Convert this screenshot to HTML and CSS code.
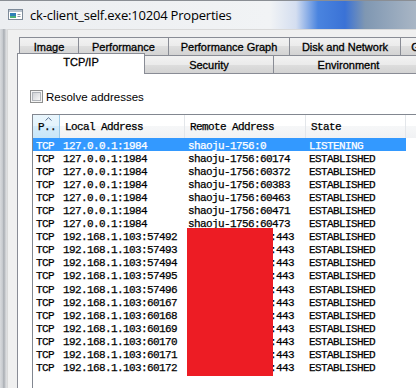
FILE: index.html
```html
<!DOCTYPE html>
<html>
<head>
<meta charset="utf-8">
<title>ck-client_self.exe:10204 Properties</title>
<link rel="stylesheet" href="styles.css">
</head>
<body>
<div class="window">
  <div class="titlebar">
    <svg class="app-icon" width="15" height="11" viewBox="0 0 15 11">
      <rect x="0.5" y="0.5" width="14" height="10" fill="#fff" stroke="#7d8a99"/>
      <rect x="1" y="1" width="13" height="2" fill="#b9c3cf"/>
      <rect x="2" y="4" width="6" height="5" fill="#2f7fb8"/>
      <rect x="2" y="7" width="6" height="2" fill="#4bb07a"/>
      <path d="M9.5 5.5h3M9.5 7.5h3" stroke="#8a96a4"/>
    </svg>
    <span class="title">ck-client_self.exe:10204 Properties</span>
  </div>
  <div class="frame">
    <div class="edge"></div>
    <div class="dialog">
      <div class="tabrow row1">
        <div class="tab w-image">Image</div>
        <div class="tab w-perf">Performance</div>
        <div class="tab w-graph">Performance Graph</div>
        <div class="tab w-disk">Disk and Network</div>
        <div class="tab w-gpu">GPU Graph</div>
      </div>
      <div class="tabrow row2">
        <div class="tab active w-tcp">TCP/IP</div>
        <div class="tab w-sec">Security</div>
        <div class="tab w-env">Environment</div>
      </div>
      <div class="panel">
        <label class="option"><span class="checkbox"><span class="check-inner"></span></span>Resolve addresses</label>
        <div class="list">
          <div class="header">
            <div class="hcell sorted">P..<svg class="sort-arrow" width="7" height="4" viewBox="0 0 7 4"><path d="M0.5 3.5L3.5 0.7L6.5 3.5" fill="none" stroke="#5b7396"/></svg></div>
            <div class="hcell">Local Address</div>
            <div class="hcell">Remote Address</div>
            <div class="hcell">State</div>
            <div class="hcell last"></div>
          </div>
          <div class="row selected"><span>TCP</span><span>127.0.0.1:1984</span><span>shaoju-1756:0</span><span>LISTENING</span></div>
          <div class="row"><span>TCP</span><span>127.0.0.1:1984</span><span>shaoju-1756:60174</span><span>ESTABLISHED</span></div>
          <div class="row"><span>TCP</span><span>127.0.0.1:1984</span><span>shaoju-1756:60372</span><span>ESTABLISHED</span></div>
          <div class="row"><span>TCP</span><span>127.0.0.1:1984</span><span>shaoju-1756:60383</span><span>ESTABLISHED</span></div>
          <div class="row"><span>TCP</span><span>127.0.0.1:1984</span><span>shaoju-1756:60463</span><span>ESTABLISHED</span></div>
          <div class="row"><span>TCP</span><span>127.0.0.1:1984</span><span>shaoju-1756:60471</span><span>ESTABLISHED</span></div>
          <div class="row"><span>TCP</span><span>127.0.0.1:1984</span><span>shaoju-1756:60473</span><span>ESTABLISHED</span></div>
          <div class="row"><span>TCP</span><span>192.168.1.103:57492</span><span class="masked">:443</span><span>ESTABLISHED</span></div>
          <div class="row"><span>TCP</span><span>192.168.1.103:57493</span><span class="masked">:443</span><span>ESTABLISHED</span></div>
          <div class="row"><span>TCP</span><span>192.168.1.103:57494</span><span class="masked">:443</span><span>ESTABLISHED</span></div>
          <div class="row"><span>TCP</span><span>192.168.1.103:57495</span><span class="masked">:443</span><span>ESTABLISHED</span></div>
          <div class="row"><span>TCP</span><span>192.168.1.103:57496</span><span class="masked">:443</span><span>ESTABLISHED</span></div>
          <div class="row"><span>TCP</span><span>192.168.1.103:60167</span><span class="masked">:443</span><span>ESTABLISHED</span></div>
          <div class="row"><span>TCP</span><span>192.168.1.103:60168</span><span class="masked">:443</span><span>ESTABLISHED</span></div>
          <div class="row"><span>TCP</span><span>192.168.1.103:60169</span><span class="masked">:443</span><span>ESTABLISHED</span></div>
          <div class="row"><span>TCP</span><span>192.168.1.103:60170</span><span class="masked">:443</span><span>ESTABLISHED</span></div>
          <div class="row"><span>TCP</span><span>192.168.1.103:60171</span><span class="masked">:443</span><span>ESTABLISHED</span></div>
          <div class="row"><span>TCP</span><span>192.168.1.103:60172</span><span class="masked">:443</span><span>ESTABLISHED</span></div>
        </div>
      </div>
    </div>
  </div>
  <div class="redaction"></div>
</div>
</body>
</html>
```
FILE: styles.css
```css
* { box-sizing: border-box; }
html, body { margin: 0; padding: 0; }
body { width: 416px; height: 388px; overflow: hidden; background: #f0f0f0; }

.window {
  position: relative;
  width: 416px;
  height: 388px;
  overflow: hidden;
  display: flex;
  flex-direction: column;
}

.titlebar {
  flex: none;
  height: 29px;
  display: flex;
  align-items: center;
  gap: 7px;
  padding-left: 8px;
  border-top: 1px solid #8a8e94;
  background: linear-gradient(to right, #eceef1 0, #f1f3f5 270px, #d4def0 296px, #4a84df 318px, #3a72d6 345px, #7f97b2 365px, #a9b6c5 416px);
}
.app-icon { flex: none; margin-top: -2px; }
.title {
  font: 13px "Open Sans", "Noto Sans", sans-serif;
  letter-spacing: -0.2px;
  color: #000;
  white-space: nowrap;
}

.frame { flex: 1; display: flex; min-height: 0; }
.edge {
  flex: none;
  width: 7px;
  background: linear-gradient(to right, #d9dbde, #c8cbcf 35%, #a8acb2 55%, #cfd1d4 80%, #e3e4e6);
}
.dialog {
  flex: 1;
  min-width: 0;
  display: flex;
  flex-direction: column;
  background: #f0f0f0;
  border-left: 1px solid #d9d9d9;
  border-top: 1px solid #d9d9d9;
  padding: 7px 0 0 9px;
}

.tabrow { flex: none; display: flex; height: 18px; }
.row1 { margin-left: 2px; }
.row2 { align-items: flex-end; }
.tab {
  flex: none;
  height: 18px;
  margin-right: -1px;
  border: 1px solid #898c95;
  border-bottom: 0;
  background: linear-gradient(#f2f2f2, #ebebeb 50%, #dedede 50%, #d3d3d3);
  display: flex;
  align-items: center;
  justify-content: center;
  font: 11px "Liberation Sans", Arial, sans-serif;
  -webkit-text-stroke: 0.3px #000;
  color: #000;
  white-space: nowrap;
}
.tab.active {
  position: relative;
  z-index: 1;
  height: 21px;
  margin-bottom: -1px;
  background: #fff;
  align-items: flex-start;
  padding-top: 2px;
}
.w-image { width: 60px; }
.w-perf { width: 91px; }
.w-graph { width: 122px; }
.w-disk { width: 112px; }
.w-gpu { width: 80px; }
.w-tcp { width: 128px; }
.w-sec { width: 130px; }
.w-env { width: 151px; }

.panel {
  flex: 1;
  min-height: 0;
  display: flex;
  flex-direction: column;
  background: #fff;
  border: 1px solid #898c95;
  margin-right: -12px;
  margin-bottom: -12px;
  padding: 16px 0 0 12px;
}

.option {
  display: flex;
  align-items: center;
  gap: 3px;
  height: 13px;
  font: 11.5px "Liberation Sans", Arial, sans-serif;
  line-height: 12px;
  color: #000;
}
.checkbox {
  flex: none;
  width: 13px;
  height: 13px;
  border: 1px solid #8e8f8f;
  background: #f4f4f4;
  padding: 1px;
}
.check-inner {
  display: block;
  width: 9px;
  height: 9px;
  border: 1px solid #b0b4ba;
  background: linear-gradient(135deg, #cfd2d6, #f7f7f7);
}

.list {
  flex: 1;
  margin: 11px 0 0 2px;
  border-left: 1px solid #828790;
  border-top: 1px solid #828790;
  font: 11px "Liberation Mono", "DejaVu Sans Mono", monospace;
  letter-spacing: -0.6px;
  -webkit-text-stroke: 0.25px currentColor;
  color: #000;
}
.header {
  display: grid;
  grid-template-columns: 27px 125px 121px 100px 60px;
  height: 23px;
}
.hcell {
  position: relative;
  display: flex;
  align-items: center;
  padding-left: 5px;
  white-space: nowrap;
  border-right: 1px solid #e3e6ea;
  background: linear-gradient(#ffffff 0, #ffffff 48%, #f6f7f8 48%, #f1f2f4 100%);
}
.hcell.sorted {
  background: linear-gradient(#e9f6fd 0, #e3f3fc 48%, #d3ecfb 48%, #c8e6f8 100%);
  border-right: 1px solid #9cc9e6;
}
.sort-arrow { position: absolute; left: 12px; top: 2px; }

.row {
  display: grid;
  grid-template-columns: 27px 125px 121px 100px;
  width: 373px;
  height: 13.05px;
  line-height: 12px;
  padding-top: 2px;
  white-space: nowrap;
}
.row span { padding-left: 3px; }
.row.selected { background: #3399ff; color: #fff; }
.masked { padding-left: 85px !important; }

.redaction {
  position: absolute;
  left: 187px;
  top: 228px;
  width: 86px;
  height: 148px;
  background: #ed1c24;
}
```
